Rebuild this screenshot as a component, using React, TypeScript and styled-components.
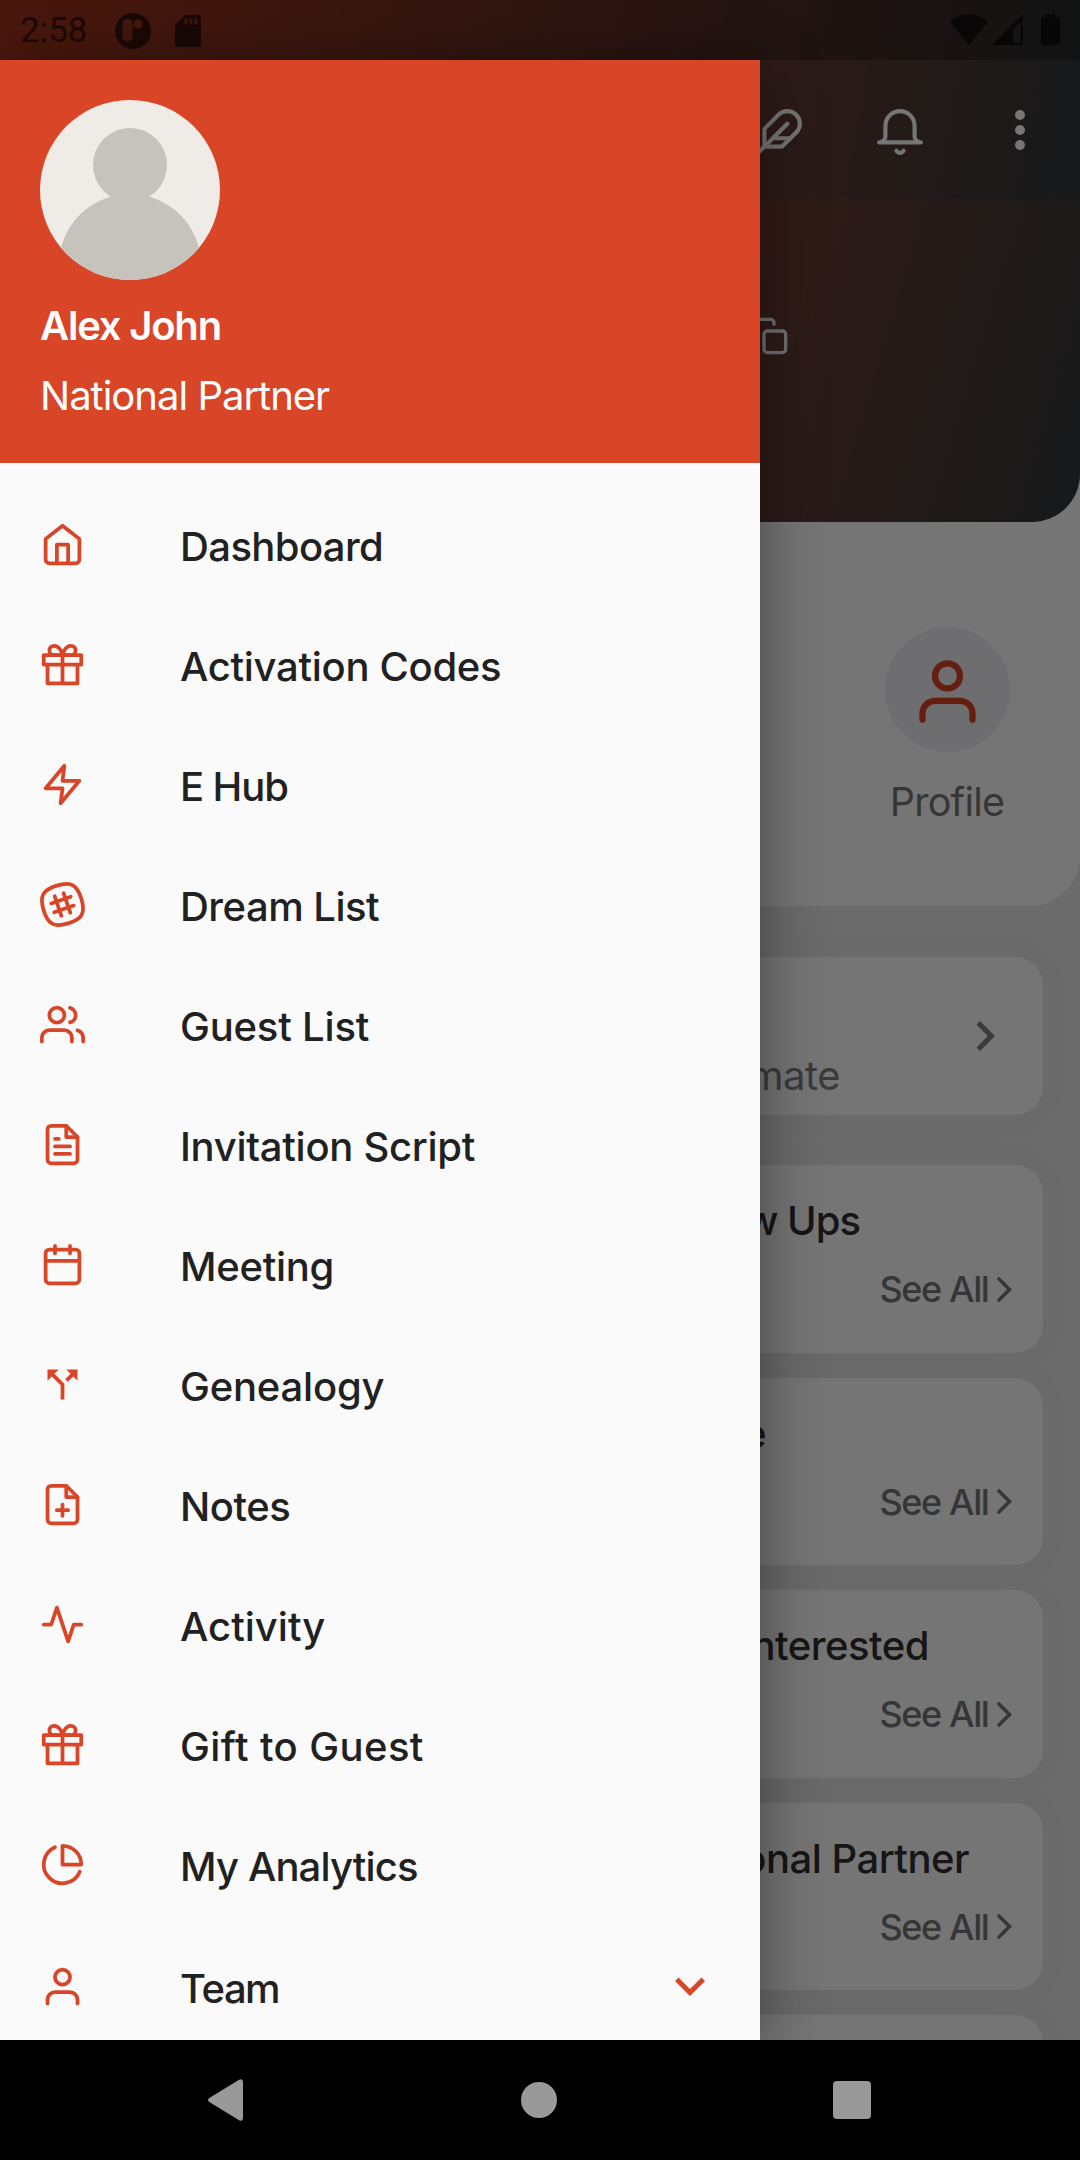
import React from "react";
import styled, { createGlobalStyle } from "styled-components";
import type { IconType } from "react-icons";
import {
  FiActivity,
  FiCalendar,
  FiCopy,
  FiFeather,
  FiFilePlus,
  FiFileText,
  FiGift,
  FiHome,
  FiPieChart,
  FiUser,
  FiUsers,
  FiZap,
} from "react-icons/fi";
import { MdCallSplit, MdKeyboardArrowDown, MdKeyboardArrowRight } from "react-icons/md";

const RED = "#d94527";

const GlobalStyle = createGlobalStyle`
  * { box-sizing: border-box; }
  body {
    margin: 0;
    background: #000;
    font-family: Inter, "Noto Sans", sans-serif;
  }
  svg { display: block; flex: none; }
`;

const Device = styled.div`
  width: 1080px;
  height: 2160px;
  display: flex;
  flex-direction: column;
  overflow: hidden;
  background: #000;
`;

const Screen = styled.div`
  position: relative;
  height: 2040px;
  overflow: hidden;
  background: #e9e9e9;
`;

/* ---------- dashboard behind the drawer ---------- */

const TopBar = styled.header`
  height: 199px;
  display: flex;
  flex-direction: column;
  background: linear-gradient(100.4deg, ${RED}, #31373a);
`;

const StatusBar = styled.div`
  height: 60px;
  padding: 1px 20px 0 20px;
  display: flex;
  align-items: center;
  background: rgba(0, 0, 0, 0.25);
  color: rgba(0, 0, 0, 0.6);
`;

const Clock = styled.span`
  width: 95px;
  padding-top: 1px;
  font: 400 35px/60px Roboto, sans-serif;
`;

const NoticeIcons = styled.div`
  display: flex;
  align-items: center;
  gap: 24px;
`;

const SystemIcons = styled.div`
  margin-left: auto;
  padding-bottom: 3px;
  display: grid;
  grid-template-columns: 42px 49px 19px;
  align-items: center;
`;

const Actions = styled.div`
  flex: 1;
  padding: 5px 36px 0 0;
  display: flex;
  align-items: center;
  justify-content: flex-end;
  gap: 71px;
  color: #fff;
`;

const Dots = styled.div`
  width: 48px;
  padding-bottom: 4px;
  display: flex;
  flex-direction: column;
  align-items: center;
  gap: 5px;
`;

const Dot = styled.i`
  width: 10px;
  height: 10px;
  border-radius: 50%;
  background: #fff;
`;

const White = styled.div`
  height: 707px;
  background: #fff;
  border-radius: 0 0 50px 50px;
  overflow: hidden;
`;

const Hero = styled.section`
  height: 323px;
  padding: 117px 291px 0 0;
  display: flex;
  justify-content: flex-end;
  border-radius: 0 0 48px 48px;
  background: linear-gradient(106.65deg, ${RED}, #31373a);
  color: rgba(255, 255, 255, 0.95);
`;

const Shortcut = styled.div`
  width: 125px;
  margin: 105px 70px 0 auto;
  display: flex;
  flex-direction: column;
  align-items: center;
  color: ${RED};
`;

const ShortcutCircle = styled.div`
  width: 125px;
  height: 125px;
  padding-top: 3px;
  display: grid;
  place-items: center;
  border-radius: 50%;
  background: #f0f0f5;
`;

const ShortcutLabel = styled.span`
  margin-top: 26px;
  margin-right: 1px;
  font-size: 39.5px;
  line-height: 48px;
  letter-spacing: -0.8px;
  white-space: nowrap;
  color: #777;
`;

const Cards = styled.div`
  padding: 51px 37px 0 37px;
  display: flex;
  flex-direction: column;
  gap: 25px;
`;

const CardBox = styled.article`
  height: 187.5px;
  flex: none;
  border-radius: 28px;
  background: #fff;
  box-shadow: 0 0 40px rgba(0, 0, 0, 0.03);
`;

const EstimateCard = styled(CardBox)`
  height: 158px;
  margin-bottom: 25px;
  padding: 49px 28px 0 0;
  display: flex;
  justify-content: flex-end;
  color: #808080;
`;

const EstimateText = styled.span`
  width: 200px;
  margin-right: 115px;
  padding-top: 46px;
  text-align: right;
  font-size: 40px;
  line-height: 48px;
  letter-spacing: -0.5px;
`;

const ListCard = styled(CardBox)`
  padding: 32px 31px 0 0;
`;

const CardTitle = styled.h3<{ $right: number; $spacing: number }>`
  margin: 0 ${(p) => p.$right}px 0 0;
  text-align: right;
  font-size: 40px;
  line-height: 48px;
  font-weight: 500;
  letter-spacing: ${(p) => p.$spacing}px;
  color: #303030;
`;

const SeeAll = styled.div`
  margin-top: 22px;
  display: flex;
  justify-content: flex-end;
  align-items: center;
  gap: 8.5px;
  font-size: 36px;
  line-height: 44px;
  font-weight: 500;
  letter-spacing: -1.4px;
  color: #777;
`;

const Scrim = styled.div`
  position: absolute;
  inset: 0;
  background: rgba(0, 0, 0, 0.54);
`;

/* ---------- drawer ---------- */

const Drawer = styled.aside`
  position: absolute;
  top: 60px;
  left: 0;
  bottom: 0;
  width: 760px;
  background: #fafafa;
  box-shadow: 0 10px 60px rgba(0, 0, 0, 0.42);
`;

const DrawerHeader = styled.div`
  height: 402.5px;
  padding: 40px;
  background: ${RED};
  color: #fff;
`;

const Name = styled.div`
  margin-top: 22px;
  font-size: 40px;
  line-height: 48px;
  font-weight: 600;
  letter-spacing: -1.2px;
`;

const Role = styled.div`
  margin-top: 22px;
  font-size: 40px;
  line-height: 48px;
  letter-spacing: -1px;
`;

const Menu = styled.nav`
  padding-top: 23.5px;
  display: flex;
  flex-direction: column;
`;

const MenuRow = styled.a<{ $last?: boolean }>`
  height: 120px;
  flex: none;
  margin-top: ${(p) => (p.$last ? 2 : 0)}px;
  padding: 0 40px;
  display: flex;
  align-items: center;
  color: ${RED};
`;

const MenuIcon = styled.span`
  width: 140px;
  padding-bottom: 4px;
`;

const MenuLabel = styled.span<{ $spacing: number }>`
  flex: 1;
  padding-top: 2px;
  font-size: 40px;
  line-height: 48px;
  font-weight: 500;
  letter-spacing: ${(p) => p.$spacing}px;
  white-space: nowrap;
  color: #212121;
`;

const Expander = styled.span`
  padding-bottom: 4px;
`;

/* ---------- system navigation ---------- */

const NavBar = styled.footer`
  height: 120px;
  padding: 0 209px 0 208px;
  display: flex;
  align-items: center;
  justify-content: space-between;
  color: #999;
`;

const SlackIcon = ({ size = 45 }: { size?: number }) => (
  <svg width={size} height={size} viewBox="0 0 24 24" fill="none" stroke="currentColor" strokeWidth="2" strokeLinecap="round" strokeLinejoin="round" overflow="visible">
    <path d="M22.08 9C19.81 1.41 16.54-.35 9 1.92S-.35 7.46 1.92 15 7.46 24.35 15 22.08 24.35 16.54 22.08 9z" />
    <path d="M12.57 5.99l3.58 10.4M7.85 7.61l3.58 10.4M16.39 7.85L5.99 11.43M18.01 12.57l-10.4 3.58" />
  </svg>
);

const BellIcon = () => (
  <svg width="50" height="50" viewBox="0 0 24 24" fill="none" stroke="currentColor" strokeWidth="2" strokeLinecap="round" strokeLinejoin="round">
    <path d="M22 17H2a3 3 0 0 0 3-3V9a7 7 0 0 1 14 0v5a3 3 0 0 0 3 3zm-8.27 4a2 2 0 0 1-3.46 0" />
  </svg>
);

const Avatar = () => (
  <svg width="180" height="180" viewBox="0 0 180 180">
    <clipPath id="avatar">
      <circle cx="90" cy="90" r="90" />
    </clipPath>
    <g clipPath="url(#avatar)">
      <rect width="180" height="180" fill="#efece7" />
      <circle cx="90" cy="65" r="37" fill="#c6c3bd" />
      <circle cx="90" cy="165" r="71" fill="#c6c3bd" />
    </g>
  </svg>
);

const AppBadge = () => (
  <svg width="36" height="36" viewBox="0 0 36 36">
    <path fillRule="evenodd" fill="currentColor" d="M18 0a18 18 0 1 1 0 36a18 18 0 0 1 0-36zM12.500 6a5 5 0 0 0-5 5v12.500a5 5 0 0 0 10 0v-12.500a5 5 0 0 0-5-5zM23 6.500a4.700 4.700 0 1 0 0 9.400a4.700 4.700 0 0 0 0-9.400z" />
  </svg>
);

const SdCard = () => (
  <svg width="26" height="32" viewBox="0 0 26 32">
    <path fillRule="evenodd" fill="currentColor" d="M10 0h13a3 3 0 0 1 3 3v26a3 3 0 0 1-3 3H3a3 3 0 0 1-3-3V10zM9.500 3.500v6h3v-6zM14.500 3.500v6h3v-6zM19.500 3.500v6h3v-6z" />
  </svg>
);

const Wifi = () => (
  <svg width="38" height="31" viewBox="0 0 38 31">
    <path fill="currentColor" d="M0 8C11-2.500 27-2.500 38 8L19 31z" />
  </svg>
);

const Signal = () => (
  <svg width="31" height="31" viewBox="0 0 31 31">
    <path fillRule="evenodd" fill="currentColor" d="M31 0v31H0zM28.500 8L21.500 15V28.500h7z" />
  </svg>
);

const Battery = () => (
  <svg width="19" height="31" viewBox="0 0 19 31">
    <path fill="currentColor" d="M5 3V0h9v3h3a2 2 0 0 1 2 2v24a2 2 0 0 1-2 2H2a2 2 0 0 1-2-2V5a2 2 0 0 1 2-2z" />
  </svg>
);

const ThinChevron = () => (
  <svg width="15" height="25" viewBox="0 0 15 25" fill="none" stroke="currentColor" strokeWidth="3.6" strokeLinecap="round">
    <path d="M2 2l10.500 10.500L2 23" />
  </svg>
);

type Item = { label: string; icon: IconType | typeof SlackIcon; spacing: number; expandable?: boolean };

const items: Item[] = [
  { label: "Dashboard", icon: FiHome, spacing: -0.6 },
  { label: "Activation Codes", icon: FiGift, spacing: -0.3 },
  { label: "E Hub", icon: FiZap, spacing: -1.1 },
  { label: "Dream List", icon: SlackIcon, spacing: -0.5 },
  { label: "Guest List", icon: FiUsers, spacing: -0.2 },
  { label: "Invitation Script", icon: FiFileText, spacing: -0.28 },
  { label: "Meeting", icon: FiCalendar, spacing: -0.28 },
  { label: "Genealogy", icon: MdCallSplit, spacing: -0.2 },
  { label: "Notes", icon: FiFilePlus, spacing: -0.5 },
  { label: "Activity", icon: FiActivity, spacing: 0 },
  { label: "Gift to Guest", icon: FiGift, spacing: 0.4 },
  { label: "My Analytics", icon: FiPieChart, spacing: -0.85 },
  { label: "Team", icon: FiUser, spacing: -1.5, expandable: true },
];

const cards = [
  { title: "w Ups", right: 152, spacing: -1 },
  { title: "e", right: 246, spacing: -0.5 },
  { title: "nterested", right: 83, spacing: -0.5 },
  { title: "onal Partner", right: 43, spacing: -0.5 },
];

export default function App() {
  return (
    <Device>
      <GlobalStyle />
      <Screen>
        <TopBar>
          <StatusBar>
            <Clock>2:58</Clock>
            <NoticeIcons>
              <AppBadge />
              <SdCard />
            </NoticeIcons>
            <SystemIcons>
              <Wifi />
              <Signal />
              <Battery />
            </SystemIcons>
          </StatusBar>
          <Actions>
            <FiFeather size={50} />
            <BellIcon />
            <Dots>
              <Dot />
              <Dot />
              <Dot />
            </Dots>
          </Actions>
        </TopBar>
        <White>
          <Hero>
            <FiCopy size={40} />
          </Hero>
          <Shortcut>
            <ShortcutCircle>
              <FiUser size={75} />
            </ShortcutCircle>
            <ShortcutLabel>Profile</ShortcutLabel>
          </Shortcut>
        </White>
        <Cards>
          <EstimateCard>
            <EstimateText>mate</EstimateText>
            <MdKeyboardArrowRight size={60} />
          </EstimateCard>
          {cards.map((c) => (
            <ListCard key={c.title}>
              <CardTitle $right={c.right} $spacing={c.spacing}>
                {c.title}
              </CardTitle>
              <SeeAll>
                See All
                <ThinChevron />
              </SeeAll>
            </ListCard>
          ))}
          <CardBox />
        </Cards>
        <Scrim />
        <Drawer>
          <DrawerHeader>
            <Avatar />
            <Name>Alex John</Name>
            <Role>National Partner</Role>
          </DrawerHeader>
          <Menu>
            {items.map(({ label, icon: Icon, spacing, expandable }) => (
              <MenuRow key={label} $last={expandable}>
                <MenuIcon>
                  <Icon size={45} />
                </MenuIcon>
                <MenuLabel $spacing={spacing}>{label}</MenuLabel>
                {expandable && (
                  <Expander>
                    <MdKeyboardArrowDown size={60} />
                  </Expander>
                )}
              </MenuRow>
            ))}
          </Menu>
        </Drawer>
      </Screen>
      <NavBar>
        <svg width="36" height="42" viewBox="0 0 36 42">
          <path fill="currentColor" d="M1 19.200L31 .800Q35 -1 35 3V39Q35 43 31 41.200L1 22.800Q-1 21 1 19.200z" />
        </svg>
        <svg width="36" height="36" viewBox="0 0 36 36">
          <circle cx="18" cy="18" r="18" fill="currentColor" />
        </svg>
        <svg width="38" height="38" viewBox="0 0 38 38">
          <rect width="38" height="38" rx="4" fill="currentColor" />
        </svg>
      </NavBar>
    </Device>
  );
}
